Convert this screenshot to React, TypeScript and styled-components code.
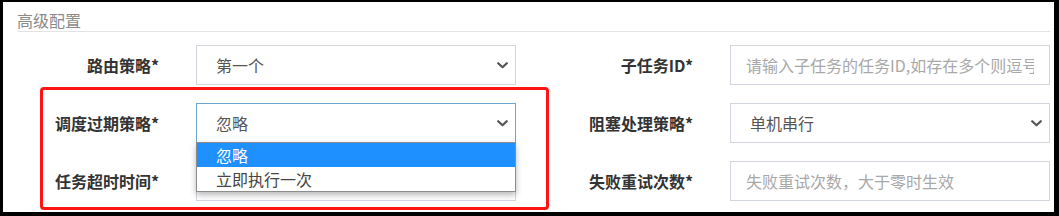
import styled, { createGlobalStyle } from 'styled-components';

const GlobalStyle = createGlobalStyle`
  html, body {
    margin: 0;
    padding: 0;
    background: #000;
  }
  body {
    font-family: "Noto Sans CJK SC", "Liberation Sans", sans-serif;
  }
`;

interface Option {
    label: string;
    active?: boolean;
}

const expireOptions: Option[] = [
    { label: '忽略', active: true },
    { label: '立即执行一次' },
];

const Chevron = () => (
    <svg width="11" height="7" viewBox="0 0 11 7">
        <path d="M1.2 1.2 L5.5 5.3 L9.8 1.2" fill="none" stroke="#555" strokeWidth="2.2" strokeLinecap="round" strokeLinejoin="round" />
    </svg>
);

const App = () => {
    return (
    <>
        <GlobalStyle />
        <Frame>
            <Panel>
                <Title>高级配置</Title>
                <Form>
                    <Label>路由策略*</Label>
                    <SelectBox>
                        <span>第一个</span>
                        <Chevron />
                    </SelectBox>
                    <Label>子任务ID*</Label>
                    <TextInput placeholder="请输入子任务的任务ID,如存在多个则逗号分隔" />

                    <Label>调度过期策略*</Label>
                    <SelectWrap>
                        <SelectBox focused>
                            <span>忽略</span>
                            <Chevron />
                        </SelectBox>
                        <DropList>
                            {expireOptions.map((o) => (
                                <DropItem key={o.label} active={o.active}>{o.label}</DropItem>
                            ))}
                        </DropList>
                    </SelectWrap>
                    <Label>阻塞处理策略*</Label>
                    <SelectBox>
                        <span>单机串行</span>
                        <Chevron />
                    </SelectBox>

                    <Label>任务超时时间*</Label>
                    <TextInput placeholder="任务超时时间，单位秒，大于零时生效" />
                    <Label>失败重试次数*</Label>
                    <TextInput placeholder="失败重试次数，大于零时生效" />
                </Form>
                <Highlight />
            </Panel>
        </Frame>
    </>
    );
};

export default App;

const Frame = styled.div`
    width: 1059px;
    height: 216px;
    padding: 2px 5px 4px 3px;
    box-sizing: border-box;
    background: #000;
`;

const Panel = styled.div`
    position: relative;
    height: 100%;
    background: #fff;
    overflow: hidden;
`;

const Title = styled.div`
    margin: 0 4px 0 14px;
    padding-top: 7px;
    height: 22px;
    line-height: 22px;
    font-size: 16px;
    color: #8a8a8a;
    border-bottom: 1px solid #e3e3e3;
`;

const Form = styled.div`
    display: grid;
    grid-template-columns: 193px 320px 214px 320px;
    grid-auto-rows: 40px;
    row-gap: 18px;
    margin-top: 13px;
`;

const Label = styled.div`
    display: flex;
    align-items: center;
    justify-content: flex-end;
    padding-right: 37px;
    font-size: 16px;
    font-weight: 700;
    color: #333;
    white-space: nowrap;
`;

const SelectWrap = styled.div`
    position: relative;
`;

const SelectBox = styled.div<{ focused?: boolean }>`
    display: flex;
    align-items: center;
    justify-content: space-between;
    height: 40px;
    box-sizing: border-box;
    padding: 0 7px 0 19px;
    border: 1px solid ${(p) => (p.focused ? '#6aa6cf' : '#d2d6de')};
    background: #fff;
    font-size: 16px;
    color: #555;
`;

const TextInput = styled.input`
    height: 40px;
    box-sizing: border-box;
    padding: 0 15px;
    border: 1px solid #d2d6de;
    outline: none;
    font-family: "Noto Sans CJK SC", "Liberation Sans", sans-serif;
    font-size: 16px;
    color: #555;

    &::placeholder {
        color: #a8a8a8;
    }
`;

const DropList = styled.div`
    position: absolute;
    top: 39px;
    left: 0;
    width: 320px;
    box-sizing: border-box;
    border: 1px solid #8c8c8c;
    background: #fff;
    box-shadow: 0 3px 6px rgba(0, 0, 0, 0.28);
    z-index: 2;
`;

const DropItem = styled.div<{ active?: boolean }>`
    height: 24px;
    line-height: 24px;
    padding-left: 19px;
    font-size: 16px;
    color: ${(p) => (p.active ? '#fff' : '#444')};
    background: ${(p) => (p.active ? '#1e90ff' : '#fff')};
`;

const Highlight = styled.div`
    position: absolute;
    left: 37px;
    top: 85px;
    width: 509px;
    height: 123px;
    box-sizing: border-box;
    border: 3px solid #ff1414;
    border-radius: 4px;
    z-index: 3;
    pointer-events: none;
`;
